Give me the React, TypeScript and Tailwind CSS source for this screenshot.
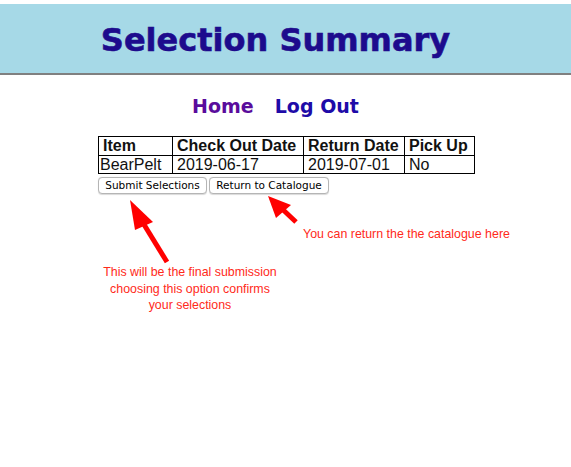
import React from "react";

export default function App() {
  return (
    <div className="relative w-[571px] h-[467px] bg-white overflow-hidden" style={{ fontFamily: '"Liberation Sans", Arial, sans-serif' }}>
      <div className="pt-[4px]">
        <div className="h-[71px] bg-[#a6d9e7] border-b-2 border-[#808080] flex items-center justify-center pr-[20px]">
          <h1 className="text-[32px] font-bold text-[#1d0b8d] leading-none pt-[3px] [-webkit-text-stroke:0.6px_#1d0b8d]" style={{ fontFamily: '"DejaVu Sans", Verdana, sans-serif' }}>
            Selection Summary
          </h1>
        </div>
      </div>
      <div className="flex justify-center gap-[21px] mt-[19px] pr-[20px] text-[19px] font-bold leading-[24px]" style={{ fontFamily: '"DejaVu Sans", Verdana, sans-serif' }}>
        <a className="text-[#5a0c9c]">Home</a>
        <a className="text-[#1e0ba8]">Log Out</a>
      </div>
      <div className="ml-[98px] mt-[18px]">
        <table className="border-collapse text-[16px] leading-[17.5px] text-[#111]">
          <thead>
            <tr>
              <th className="border border-black text-left font-bold px-[4px] py-0 w-[74px]">Item</th>
              <th className="border border-black text-left font-bold px-[4px] py-0 w-[131px]">Check Out Date</th>
              <th className="border border-black text-left font-bold px-[4px] py-0 w-[101px]">Return Date</th>
              <th className="border border-black text-left font-bold px-[4px] py-0 w-[70px]">Pick Up</th>
            </tr>
          </thead>
          <tbody>
            <tr>
              <td className="border border-black px-[1px] py-0">BearPelt</td>
              <td className="border border-black px-[4px] py-0">2019-06-17</td>
              <td className="border border-black px-[4px] py-0">2019-07-01</td>
              <td className="border border-black px-[4px] py-0">No</td>
            </tr>
          </tbody>
        </table>
        <div className="flex gap-[2px] mt-[3px]" style={{ fontFamily: '"DejaVu Sans", Verdana, sans-serif' }}>
          <button className="w-[109px] h-[17px] rounded-[4px] border border-[#b5b5b5] bg-white text-[10.5px] leading-none text-black shadow-[0_0.5px_1px_rgba(0,0,0,0.15)]">Submit Selections</button>
          <button className="w-[120px] h-[17px] rounded-[4px] border border-[#b5b5b5] bg-white text-[10.5px] leading-none text-black shadow-[0_0.5px_1px_rgba(0,0,0,0.15)]">Return to Catalogue</button>
        </div>
      </div>

      <svg className="absolute left-0 top-0" width="571" height="467">
        <line x1="167" y1="262" x2="140" y2="218" stroke="#ff0000" strokeWidth="5" />
        <polygon points="130,200 153,222 135,230" fill="#ff0000" />
        <line x1="296" y1="222" x2="279" y2="206" stroke="#ff0000" strokeWidth="5" />
        <polygon points="268,196 291,205 276,218" fill="#ff0000" />
      </svg>

      <div className="absolute left-[70px] top-[264px] w-[240px] text-center text-[12.4px] leading-[16.5px] text-[#ff2a1a]">
        This will be the final submission<br />choosing this option confirms<br />your selections
      </div>
      <div className="absolute left-[303px] top-[227px] text-[12.4px] leading-[15px] text-[#ff2a1a]">
        You can return the the catalogue here
      </div>
    </div>
  );
}
